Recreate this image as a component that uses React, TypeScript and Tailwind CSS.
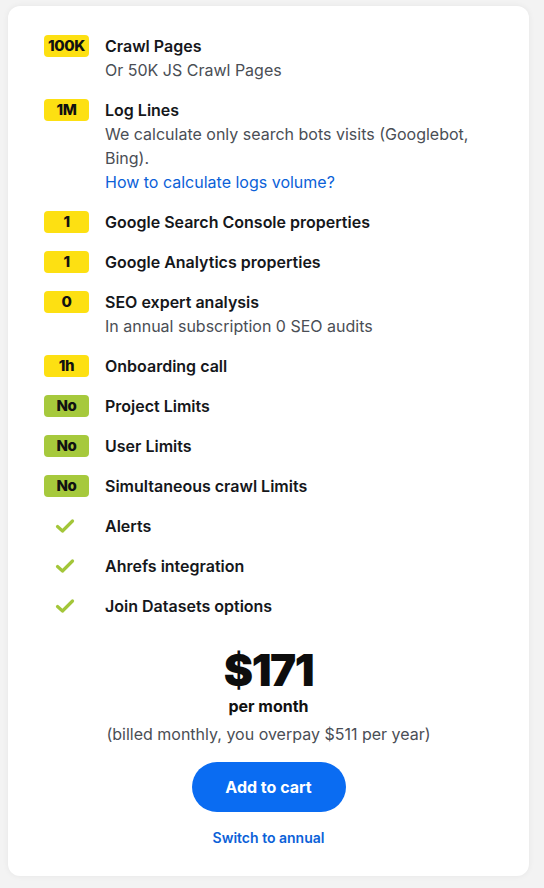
const font = { fontFamily: "Inter, 'Noto Sans', sans-serif" };

type Feature = {
  badge: string | null;
  tone?: "yellow" | "green";
  title: string;
  sub?: string[];
  link?: string;
};

const features: Feature[] = [
  { badge: "100K", tone: "yellow", title: "Crawl Pages", sub: ["Or 50K JS Crawl Pages"] },
  {
    badge: "1M",
    tone: "yellow",
    title: "Log Lines",
    sub: ["We calculate only search bots visits (Googlebot, Bing)."],
    link: "How to calculate logs volume?",
  },
  { badge: "1", tone: "yellow", title: "Google Search Console properties" },
  { badge: "1", tone: "yellow", title: "Google Analytics properties" },
  { badge: "0", tone: "yellow", title: "SEO expert analysis", sub: ["In annual subscription 0 SEO audits"] },
  { badge: "1h", tone: "yellow", title: "Onboarding call" },
  { badge: "No", tone: "green", title: "Project Limits" },
  { badge: "No", tone: "green", title: "User Limits" },
  { badge: "No", tone: "green", title: "Simultaneous crawl Limits" },
  { badge: null, title: "Alerts" },
  { badge: null, title: "Ahrefs integration" },
  { badge: null, title: "Join Datasets options" },
];

function Check() {
  return (
    <svg width="20" height="16" viewBox="0 0 20 16" fill="none">
      <path
        d="M2.5 8.5 L7.5 13 L17.5 3"
        stroke="#a3c639"
        strokeWidth="3.2"
        strokeLinecap="round"
        strokeLinejoin="round"
      />
    </svg>
  );
}

function Badge({ f }: { f: Feature }) {
  if (!f.badge) {
    return (
      <div className="flex h-6 w-[45px] shrink-0 items-center justify-center pr-[3px]">
        <Check />
      </div>
    );
  }
  return (
    <div className="flex h-6 w-[45px] shrink-0 items-center">
      <span
        className={
          "flex h-[22px] w-full items-center justify-center rounded-[4px] text-[15px] font-extrabold tracking-[-0.4px] text-[#111] " +
          (f.tone === "green" ? "bg-[#a6c93c]" : "bg-[#fde012]")
        }
      >
        {f.badge}
      </span>
    </div>
  );
}

export default function App() {
  return (
    <div className="min-h-[888px] bg-[#f3f3f3] px-2 pt-[6px] pb-3" style={font}>
      <div className="w-[521px] rounded-[12px] bg-white px-9 pt-[28px] pb-[28px] shadow-[0_0_6px_rgba(0,0,0,0.06)]">
        <ul className="flex flex-col gap-4">
          {features.map((f, i) => (
            <li key={i} className="flex gap-4">
              <Badge f={f} />
              <div className="flex flex-col text-[16px] leading-6">
                <span className="font-semibold text-[#15171b]">{f.title}</span>
                {f.sub?.map((s, j) => (
                  <span key={j} className="text-[#4a4e55]">
                    {s}
                  </span>
                ))}
                {f.link && <a className="text-[#0b61d8]">{f.link}</a>}
              </div>
            </li>
          ))}
        </ul>
        <div className="mt-[28px] flex flex-col items-center">
          <div className="text-[44px] leading-[48px] font-black tracking-[-1.5px] text-[#0d0d0d]">
            $171
          </div>
          <div className="text-[16px] leading-6 font-bold text-[#111]">per month</div>
          <div className="mt-1 text-[16px] leading-6 text-[#4a4e55]">
            (billed monthly, you overpay $511 per year)
          </div>
          <button
            type="button"
            className="mt-[16px] h-[50px] w-[154px] rounded-full bg-[#0a6cf2] text-[16px] font-bold text-white"
          >
            Add to cart
          </button>
          <a className="mt-[16px] text-[14px] leading-5 font-semibold text-[#0b61d8]">Switch to annual</a>
        </div>
      </div>
    </div>
  );
}
